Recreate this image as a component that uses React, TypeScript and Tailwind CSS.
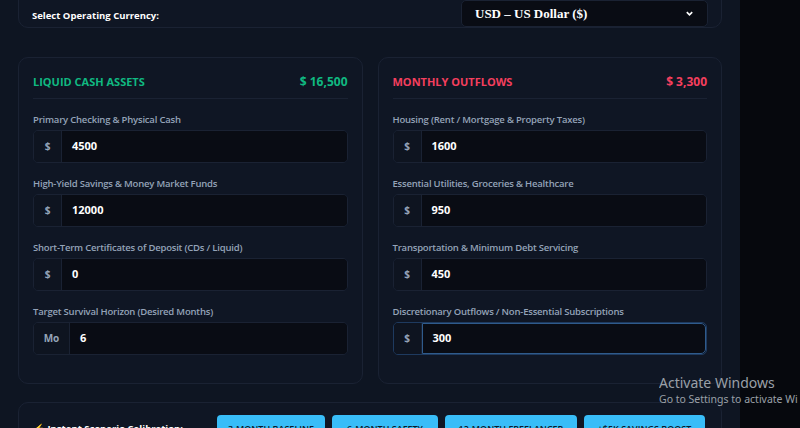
import React from "react";

const F = { fontFamily: '"Open Sans","Noto Sans",sans-serif' };

function Field({ label, prefix, value, focus }: { label: string; prefix: string; value: string; focus?: boolean }) {
  return (
    <div className="flex flex-col">
      <div className="text-[9.5px] font-semibold text-[#94a3b8] h-[11px] leading-[11px] mb-[5px] tracking-[-0.2px]">{label}</div>
      <div className={`flex h-[33px] rounded-[5px] border ${focus ? "border-[#1e3a5f]" : "border-[#1a2233]"} overflow-hidden`}>
        <div className={`${prefix === "Mo" ? "w-[36px]" : "w-[28px]"} bg-[#0e1420] flex items-center justify-center text-[10px] font-bold text-[#94a3b8] border-r border-[#1a2233]`}>{prefix}</div>
        <div className={`flex-1 bg-[#090c14] flex items-center pl-[10px] text-[11px] font-bold text-white ${focus ? "border border-[#2f5b8c] rounded-r-[5px]" : ""}`}>{value}</div>
      </div>
    </div>
  );
}

function Card({ title, total, color, fields }: { title: string; total: string; color: string; fields: [string, string, string, boolean?][] }) {
  return (
    <div className="flex-1 rounded-[10px] border border-[#1a2233] bg-[#0f1624] px-[14px] pt-[17px] h-[327px]">
      <div className={`flex justify-between items-center text-[11px] font-bold ${color} h-[14px]`}>
        <span>{title}</span><span className="text-[12px]">{total}</span>
      </div>
      <div className="h-px bg-[#1a2233] mt-[9px] mb-[15px]" />
      <div className="flex flex-col gap-[15px]">
        {fields.map(([l, p, v, f]) => <Field key={l} label={l} prefix={p} value={v} focus={f} />)}
      </div>
    </div>
  );
}

export default function App() {
  return (
    <div style={F} className="w-[800px] h-[428px] overflow-hidden flex bg-[#06080d] relative">
      <div className="w-[740px] bg-[#0e1522] px-[18px] flex flex-col">
        <div className="-mt-[20px] h-[58px] rounded-[10px] border border-[#1a2233] bg-[#0f1624] flex items-start justify-between pl-[13px] pr-[13px] pt-[20px]">
          <span className="text-[9.5px] font-bold text-white mt-[8px]">Select Operating Currency:</span>
          <div className="w-[247px] h-[27px] rounded-[5px] bg-[#090c14] border border-[#1a2233] flex items-center justify-between px-[13px] -mt-[1px]">
            <span className="text-[13px] font-semibold text-white" style={{ fontFamily: '"Liberation Serif",serif' }}>USD – US Dollar ($)</span>
            <svg width="9" height="9" viewBox="0 0 10 10"><path d="M2 3.5 5 6.5 8 3.5" stroke="white" strokeWidth="1.8" fill="none" /></svg>
          </div>
        </div>
        <div className="flex gap-[15px] mt-[19px] pt-[10px]">
          <Card title="LIQUID CASH ASSETS" total="$ 16,500" color="text-[#10b981]" fields={[
            ["Primary Checking & Physical Cash", "$", "4500"],
            ["High-Yield Savings & Money Market Funds", "$", "12000"],
            ["Short-Term Certificates of Deposit (CDs / Liquid)", "$", "0"],
            ["Target Survival Horizon (Desired Months)", "Mo", "6"],
          ]} />
          <Card title="MONTHLY OUTFLOWS" total="$ 3,300" color="text-[#f43f5e]" fields={[
            ["Housing (Rent / Mortgage & Property Taxes)", "$", "1600"],
            ["Essential Utilities, Groceries & Healthcare", "$", "950"],
            ["Transportation & Minimum Debt Servicing", "$", "450"],
            ["Discretionary Outflows / Non-Essential Subscriptions", "$", "300", true],
          ]} />
        </div>
        <div className="mt-[18px] h-[60px] shrink-0 rounded-[10px] border border-[#1a2233] bg-[#0f1624] flex items-start pt-[12px] pl-[14px] pr-[14px]">
          <span className="text-[9.5px] font-bold text-white mt-[7px] w-[184px]"><span className="text-[#facc15]">⚡</span> Instant Scenario Calibration:</span>
          <div className="flex gap-[7px]">
            {["3-MONTH BASELINE", "6-MONTH SAFETY", "12-MONTH FREELANCER", "+$5K SAVINGS BOOST"].map((b, i) => (
              <div key={b} className={`h-[28px] rounded-[4px] bg-[#38bdf8] text-[#0c1a2b] text-[9px] font-semibold flex items-center justify-center ${["w-[108px]", "w-[106px]", "w-[132px]", "w-[121px]"][i]}`}>{b}</div>
            ))}
          </div>
        </div>
      </div>
      <div className="absolute left-[659px] top-[374px] text-[#9aa0a8] w-[141px] overflow-hidden" style={{ fontFamily: '"Noto Sans",sans-serif' }}>
        <div className="text-[14px] leading-[17px]">Activate Windows</div>
        <div className="text-[10.5px] leading-[14px] mt-[1px] whitespace-nowrap">Go to Settings to activate Wi</div>
      </div>
    </div>
  );
}
